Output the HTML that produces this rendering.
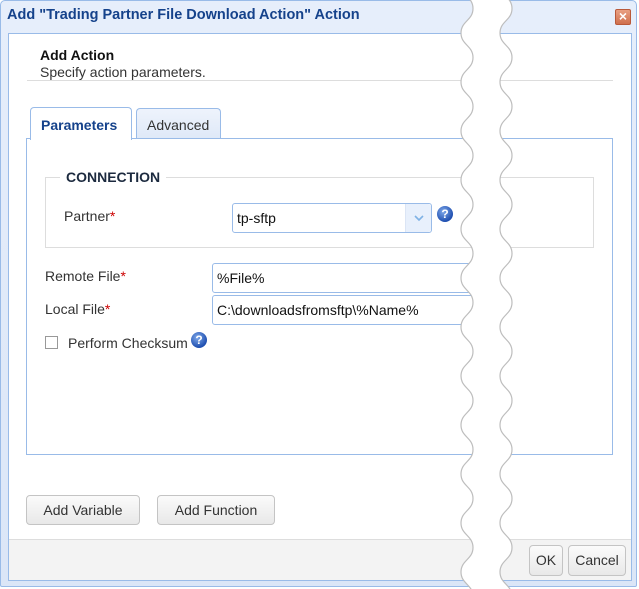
<!DOCTYPE html>
<html><head><meta charset="utf-8">
<style>
*{box-sizing:border-box;margin:0;padding:0}
body{width:639px;height:589px;background:#fff;position:relative;overflow:hidden;font-family:"Liberation Sans",Arial,sans-serif;font-size:14px;color:#222}
.a{position:absolute}
#dlg{left:0;top:0;width:637px;height:587px;border:1px solid #99bbe8;border-radius:5px 5px 2px 2px;background:linear-gradient(#e6eefb,#dbe6f7)}
#title{left:7px;top:7px;font-weight:bold;font-size:14.5px;color:#15428b;white-space:nowrap}
#close{left:615px;top:9px;width:16px;height:16px;background:linear-gradient(#e9a083,#cf6f4d);border:1px solid #b9593a;border-radius:2px;color:#fff;font-size:14px;font-weight:bold;line-height:13px;text-align:center}
#bodyw{left:8px;top:33px;width:624px;height:548px;background:#fff;border:1px solid #99bbe8}
#foot{left:9px;top:539px;width:622px;height:41px;background:#f3f3f3;border-top:1px solid #ddd}
.rule{left:27px;top:80px;width:586px;height:1px;background:#ddd}
.tab{height:32px;border:1px solid #99bbe8;border-bottom:none;border-radius:4px 4px 0 0;padding:8px 10px 0;color:#15428b}
#panel{left:26px;top:138px;width:587px;height:317px;border:1px solid #99bbe8}
#fs{left:45px;top:177px;width:549px;height:71px;border:1px solid #ddd}
#legend{left:60px;top:169px;padding:0 6px;background:#fff;font-weight:bold;font-size:14px;color:#1c2a3f}
.lbl{color:#333}
.req{color:#c00}
.inp{border:1px solid #99bbe8;border-radius:3px;height:30px;padding:6px 4px;background:#fff;white-space:nowrap;overflow:hidden;color:#111}
.help{width:16px;height:16px;border-radius:50%;background:radial-gradient(circle at 40% 35%,#7fa9ea,#1f4fb0 70%);color:#fff;font-weight:bold;font-size:12px;line-height:16px;text-align:center}
.btn{border:1px solid #c4c4c4;border-radius:4px;background:linear-gradient(#fbfbfb,#e8e8e8);text-align:center;color:#333;font-size:14px}
</style></head><body>
<div id="dlg" class="a"></div>
<div id="title" class="a">Add "Trading Partner File Download Action" Action</div>
<div id="close" class="a">×</div>
<div id="bodyw" class="a"></div>
<div id="foot" class="a"></div>

<div class="a" style="left:40px;top:47px;font-weight:bold;font-size:14px;color:#111">Add Action</div>
<div class="a" style="left:40px;top:64px;font-size:14px;color:#333">Specify action parameters.</div>
<div class="a rule"></div>

<div id="panel" class="a"></div>
<div class="a tab" style="left:30px;top:107px;width:102px;height:33px;background:#fff;font-weight:bold;padding-top:9px">Parameters</div>
<div class="a tab" style="left:136px;top:108px;width:85px;height:30px;background:linear-gradient(#eef3fc,#dfe9f8);color:#333">Advanced</div>

<div id="fs" class="a"></div>
<div id="legend" class="a">CONNECTION</div>
<div class="a lbl" style="left:64px;top:208px">Partner<span class="req">*</span></div>
<div class="a inp" style="left:232px;top:203px;width:200px;height:30px">tp-sftp</div>
<div class="a" style="left:405px;top:204px;width:26px;height:28px;background:#e8f0fc;border-left:1px solid #dbe5f5;border-radius:0 3px 3px 0">
<svg width="26" height="28"><path d="M9 12 L13 16 L17 12" stroke="#7fb2e5" stroke-width="1.6" fill="none"/></svg></div>
<div class="a help" style="left:437px;top:206px">?</div>

<div class="a lbl" style="left:45px;top:268px">Remote File<span class="req">*</span></div>
<div class="a inp" style="left:212px;top:263px;width:280px;height:30px">%File%</div>
<div class="a lbl" style="left:45px;top:301px">Local File<span class="req">*</span></div>
<div class="a inp" style="left:212px;top:295px;width:280px;height:30px">C:\downloadsfromsftp\%Name%</div>
<div class="a" style="left:45px;top:336px;width:13px;height:13px;border:1px solid #999;background:#fff"></div>
<div class="a lbl" style="left:68px;top:335px">Perform Checksum</div>
<div class="a help" style="left:191px;top:332px">?</div>

<div class="a btn" style="left:26px;top:495px;width:114px;height:30px;line-height:28px">Add Variable</div>
<div class="a btn" style="left:157px;top:495px;width:118px;height:30px;line-height:28px">Add Function</div>
<div class="a btn" style="left:529px;top:545px;width:34px;height:31px;line-height:29px">OK</div>
<div class="a btn" style="left:568px;top:545px;width:58px;height:31px;line-height:29px">Cancel</div>

<svg class="a" style="left:0;top:0" width="639" height="589">
<path fill="#fff" d="M461,-16 c0,12 12,12.5 12,24.5 c0,12 -12,12.5 -12,24.5 c0,12 12,12.5 12,24.5 c0,12 -12,12.5 -12,24.5 c0,12 12,12.5 12,24.5 c0,12 -12,12.5 -12,24.5 c0,12 12,12.5 12,24.5 c0,12 -12,12.5 -12,24.5 c0,12 12,12.5 12,24.5 c0,12 -12,12.5 -12,24.5 c0,12 12,12.5 12,24.5 c0,12 -12,12.5 -12,24.5 c0,12 12,12.5 12,24.5 c0,12 -12,12.5 -12,24.5 c0,12 12,12.5 12,24.5 c0,12 -12,12.5 -12,24.5 c0,12 12,12.5 12,24.5 c0,12 -12,12.5 -12,24.5 c0,12 12,12.5 12,24.5 c0,12 -12,12.5 -12,24.5 c0,12 12,12.5 12,24.5 c0,12 -12,12.5 -12,24.5 c0,12 12,12.5 12,24.5 c0,12 -12,12.5 -12,24.5 c0,12 12,12.5 12,24.5 L512,596.5 c0,-12 -12,-12.5 -12,-24.5 c0,-12 12,-12.5 12,-24.5 c0,-12 -12,-12.5 -12,-24.5 c0,-12 12,-12.5 12,-24.5 c0,-12 -12,-12.5 -12,-24.5 c0,-12 12,-12.5 12,-24.5 c0,-12 -12,-12.5 -12,-24.5 c0,-12 12,-12.5 12,-24.5 c0,-12 -12,-12.5 -12,-24.5 c0,-12 12,-12.5 12,-24.5 c0,-12 -12,-12.5 -12,-24.5 c0,-12 12,-12.5 12,-24.5 c0,-12 -12,-12.5 -12,-24.5 c0,-12 12,-12.5 12,-24.5 c0,-12 -12,-12.5 -12,-24.5 c0,-12 12,-12.5 12,-24.5 c0,-12 -12,-12.5 -12,-24.5 c0,-12 12,-12.5 12,-24.5 c0,-12 -12,-12.5 -12,-24.5 c0,-12 12,-12.5 12,-24.5 c0,-12 -12,-12.5 -12,-24.5 c0,-12 12,-12.5 12,-24.5 c0,-12 -12,-12.5 -12,-24.5 c0,-12 12,-12.5 12,-24.5 c0,-12 -12,-12.5 -12,-24.5 Z"/>
<g fill="none" stroke="#bdbdbd" stroke-width="1.2">
<path id="w" d="M461,-16 c0,12 12,12.5 12,24.5 c0,12 -12,12.5 -12,24.5 c0,12 12,12.5 12,24.5 c0,12 -12,12.5 -12,24.5 c0,12 12,12.5 12,24.5 c0,12 -12,12.5 -12,24.5 c0,12 12,12.5 12,24.5 c0,12 -12,12.5 -12,24.5 c0,12 12,12.5 12,24.5 c0,12 -12,12.5 -12,24.5 c0,12 12,12.5 12,24.5 c0,12 -12,12.5 -12,24.5 c0,12 12,12.5 12,24.5 c0,12 -12,12.5 -12,24.5 c0,12 12,12.5 12,24.5 c0,12 -12,12.5 -12,24.5 c0,12 12,12.5 12,24.5 c0,12 -12,12.5 -12,24.5 c0,12 12,12.5 12,24.5 c0,12 -12,12.5 -12,24.5 c0,12 12,12.5 12,24.5 c0,12 -12,12.5 -12,24.5 c0,12 12,12.5 12,24.5 c0,12 -12,12.5 -12,24.5 c0,12 12,12.5 12,24.5"/>
<use href="#w" x="39"/>
</g>
</svg>
</body></html>
